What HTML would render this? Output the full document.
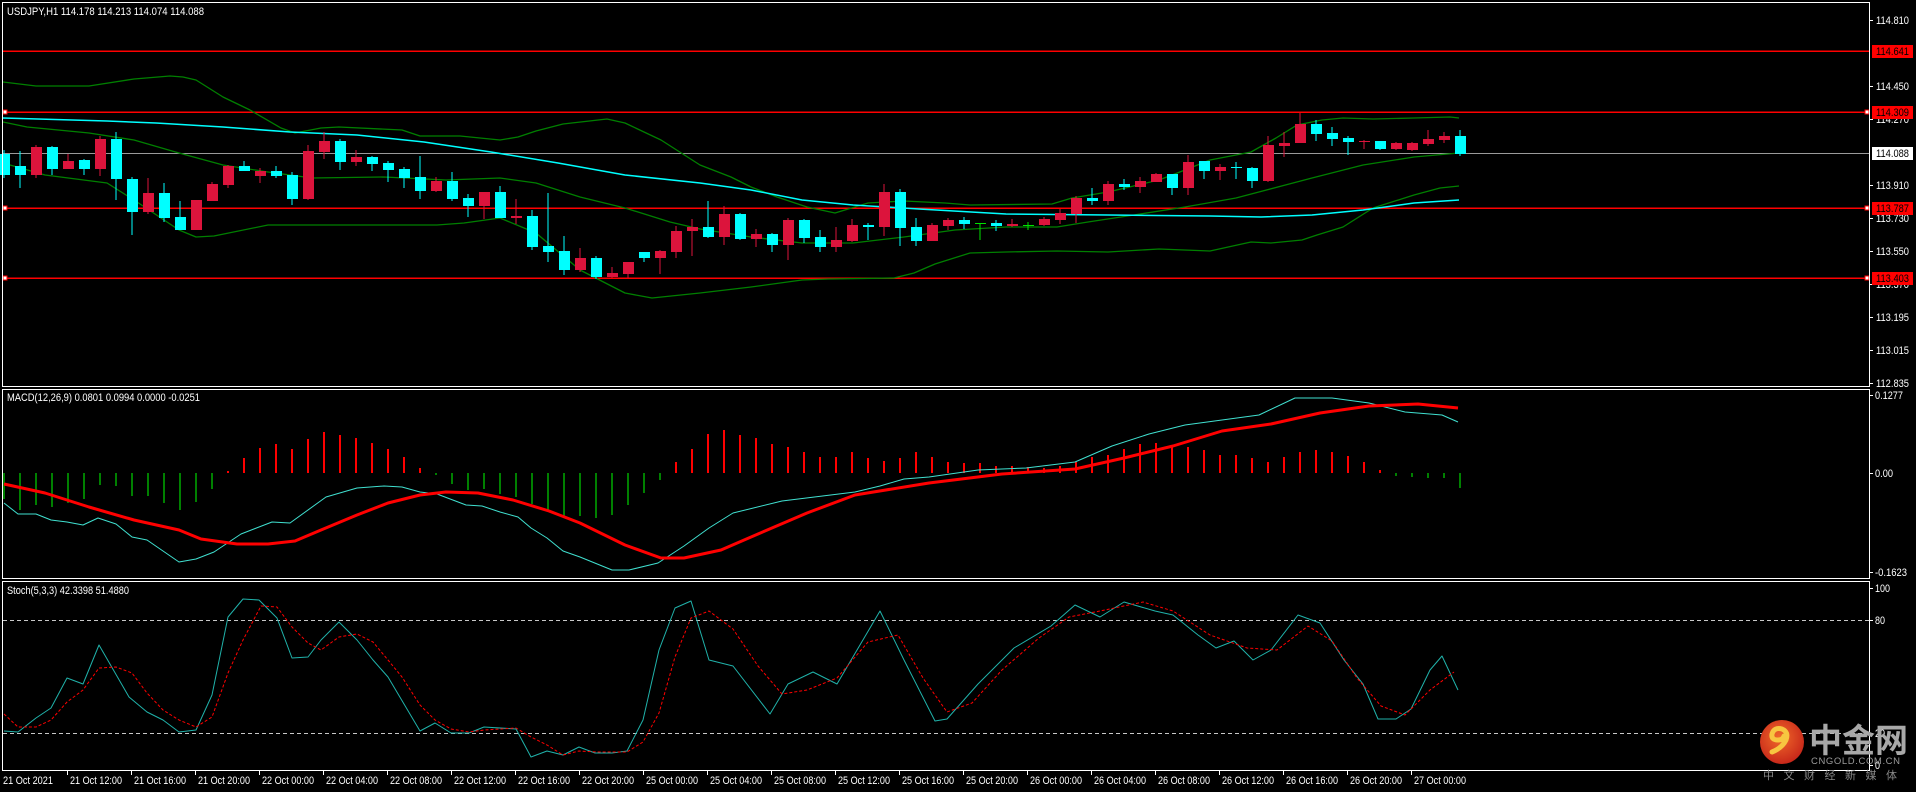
<!DOCTYPE html>
<html><head><meta charset="utf-8"><style>
html,body{margin:0;padding:0;background:#000;width:1916px;height:792px;overflow:hidden}
svg{display:block}
text{font-family:"Liberation Sans",sans-serif;font-size:11px;fill:#fff}
</style></head><body>
<svg id="s" width="1916" height="792" xmlns="http://www.w3.org/2000/svg">
<rect width="1916" height="792" fill="#000"/>
<g id="g"></g>
<g fill="none" stroke="#fff" stroke-width="1">
<rect x="2.5" y="2.5" width="1867" height="384"/>
<rect x="2.5" y="389.5" width="1867" height="189"/>
<rect x="2.5" y="581.5" width="1867" height="189"/>
</g>
<text x="7" y="15" textLength="197" lengthAdjust="spacingAndGlyphs">USDJPY,H1  114.178 114.213 114.074 114.088</text>
<text x="7" y="401" textLength="193" lengthAdjust="spacingAndGlyphs">MACD(12,26,9) 0.0801 0.0994 0.0000 -0.0251</text>
<text x="7" y="594" textLength="122" lengthAdjust="spacingAndGlyphs">Stoch(5,3,3) 42.3398 51.4880</text>
<g id="ax"></g>
<defs>
<radialGradient id="lg" cx="45%" cy="40%" r="60%"><stop offset="0" stop-color="#f06a2a"/><stop offset="1" stop-color="#c8281a"/></radialGradient>
</defs>
<circle cx="1782" cy="742" r="22" fill="url(#lg)"/>
<path d="M1772 752 q10 -4 14 -12 q3 -8 -4 -11 q-8 -2 -10 5 q-1 6 6 6 q5 0 6 -4" fill="none" stroke="#f7c640" stroke-width="5" stroke-linecap="round"/>
<text x="1809" y="752" style="font-family:'Noto Sans CJK SC',sans-serif;font-size:33px;font-weight:bold;fill:#a8a8a8">中金网</text>
<text x="1811" y="764" style="font-size:9.5px;fill:#9a9a9a;letter-spacing:0.6px">CNGOLD.COM.CN</text>
<text x="1763" y="779" style="font-family:'Noto Sans CJK SC',sans-serif;font-size:11px;fill:#888;letter-spacing:9.5px">中文财经新媒体</text>
</svg>
<script>
var NS="http://www.w3.org/2000/svg",g=document.getElementById('g'),ax=document.getElementById('ax');
function el(p,tag,a,txt){var e=document.createElementNS(NS,tag);for(var k in a)e.setAttribute(k,a[k]);if(txt!=null)e.textContent=txt;p.appendChild(e);return e;}
function line(pts,col,w,dash){el(g,'polyline',{points:pts.map(function(p){return p[0]+','+p[1]}).join(' '),fill:'none',stroke:col,'stroke-width':w||1,'stroke-dasharray':dash||'none','stroke-linejoin':'round'});}
[[51,'#f00'],[112,'#f00'],[208,'#f00'],[278,'#f00']].forEach(function(l){el(g,'rect',{x:3,y:l[0]-0.5,width:1867,height:1.5,fill:l[1]});});
el(g,'rect',{x:3,y:153,width:1867,height:1,fill:'#9a9a9a'});
line([[3,82],[36,86],[89,86],[134,79],[170,76],[183,77],[196,80],[223,97],[250,110],[281,128],[295,133],[321,128],[339,127],[402,130],[420,136],[460,136],[500,140],[518,137],[536,131],[563,124],[607,119],[625,123],[661,140],[700,165],[731,177],[751,187],[777,197],[807,207],[835,213],[868,203],[904,201],[945,203],[970,205],[1052,204],[1072,198],[1108,192],[1159,180],[1185,170],[1210,160],[1236,155],[1251,152],[1276,138],[1297,125],[1322,120],[1343,118],[1373,119],[1414,118],[1450,117],[1459,118]],'#007f00',1.3);
line([[3,122],[27,127],[89,133],[134,140],[179,153],[223,165],[268,172],[312,178],[384,177],[446,180],[500,178],[536,183],[580,197],[625,208],[670,222],[700,229],[751,237],[802,243],[853,243],[904,237],[955,230],[1006,227],[1057,227],[1088,222],[1134,215],[1185,207],[1236,198],[1312,178],[1363,165],[1414,157],[1459,153]],'#007f00',1.3);
line([[3,163],[45,175],[107,183],[134,200],[179,230],[196,237],[214,236],[268,225],[312,225],[437,225],[464,223],[500,218],[536,233],[580,270],[625,293],[652,298],[700,293],[751,287],[802,280],[828,279],[894,278],[914,273],[935,264],[970,253],[1006,252],[1057,251],[1108,252],[1159,249],[1210,251],[1251,242],[1271,243],[1302,240],[1317,235],[1343,227],[1373,208],[1414,195],[1440,188],[1459,186]],'#007f00',1.3);
line([[3,118],[107,121],[156,123],[223,127],[290,132],[357,135],[424,142],[491,152],[558,163],[625,175],[700,183],[751,190],[802,200],[853,205],[919,209],[1006,214],[1108,215],[1210,216],[1261,217],[1312,215],[1363,210],[1414,203],[1459,200]],'#00ffff',1.5);
var C=[[154,175,150,178,'c'],[166,175,151,188,'c'],[147,175,145,178,'r'],[147,169,146,175,'c'],[161,169,154,169,'r'],[160,169,159,175,'c'],[139,169,136,176,'r'],[139,179,132,200,'c'],[179,212,177,235,'c'],[193,212,178,214,'r'],[193,218,183,222,'c'],[217,230,201,230,'c'],[200,230,200,230,'r'],[184,201,182,201,'r'],[166,185,165,188,'r'],[166,171,161,171,'c'],[171,176,168,183,'r'],[171,176,166,178,'c'],[175,199,172,205,'c'],[151,199,145,200,'r'],[141,152,132,159,'r'],[141,162,139,170,'c'],[157,162,150,166,'r'],[157,164,156,171,'c'],[163,170,161,182,'c'],[169,178,167,188,'c'],[177,191,156,199,'c'],[181,191,177,192,'r'],[181,199,172,201,'c'],[198,206,194,217,'c'],[192,206,192,219,'r'],[192,218,186,218,'c'],[216,218,199,224,'r'],[216,247,210,250,'c'],[246,252,193,262,'c'],[251,270,236,275,'c'],[258,270,248,272,'r'],[258,277,256,279,'c'],[273,277,267,278,'r'],[262,274,262,278,'r'],[252,258,252,262,'c'],[251,258,250,274,'r'],[231,252,226,258,'r'],[227,231,219,256,'r'],
[227,237,201,238,'c'],[214,237,206,245,'r'],[214,239,213,240,'c'],[234,239,229,247,'r'],[234,245,233,252,'c'],[220,245,218,260,'r'],[220,238,219,243,'c'],[237,247,230,252,'c'],[240,247,227,252,'r'],[225,241,219,242,'r'],[225,227,223,240,'c'],[192,227,184,236,'r'],[192,228,189,246,'c'],[227,241,218,246,'c'],[225,241,223,241,'r'],[220,226,218,230,'r'],[220,224,217,229,'c'],[223,224,223,240,'d'],[223,226,220,231,'c'],[224,226,219,227,'r'],[225,226,222,230,'d'],[219,225,217,226,'r'],[213,220,209,224,'r'],[198,214,196,223,'r'],[198,201,188,205,'c'],[184,201,181,205,'r'],[184,187,179,190,'c'],[181,187,177,193,'r'],[174,182,173,182,'r'],[174,188,174,195,'c'],[162,188,155,195,'r'],[161,171,161,179,'c'],[167,171,164,180,'r'],[167,168,162,179,'c'],[168,181,167,188,'c'],[145,181,136,182,'r'],[143,146,132,157,'r'],[124,143,113,143,'r'],[124,134,120,141,'c'],[133,139,127,146,'c'],[138,142,136,155,'c'],[141,142,140,149,'r'],[141,149,141,150,'c'],[143,149,142,150,'r'],[143,150,142,151,'r'],[139,144,130,146,'r'],[136,140,132,143,'r'],[136,154,130,156,'c']];
var col={c:'#00ffff',r:'#dc143c',d:'#00e000'};
C.forEach(function(k,i){var x=4+16*i,cl=col[k[4]];
 el(g,'rect',{x:x-0.5,y:k[2],width:1,height:k[3]-k[2],fill:cl});
 var h=Math.max(k[1]-k[0],1);
 el(g,'rect',{x:x-5,y:k[0],width:11,height:h,fill:cl});});
[112,208,278].forEach(function(y){el(g,'rect',{x:3,y:y-2,width:4,height:4,fill:'#fff',stroke:'#f00','stroke-width':1});el(g,'rect',{x:1865,y:y-2,width:4,height:4,fill:'#fff',stroke:'#f00','stroke-width':1});});
var H=[-26,-37,-32,-34,-30,-26,-12,-13,-23,-23,-30,-37,-29,-16,2,15,25,29,24,34,41,38,35,30,24,16,5,-2,-11,-17,-16,-21,-24,-31,-38,-45,-43,-45,-42,-32,-20,-7,11,24,39,43,38,35,29,26,21,16,16,21,15,12,15,21,16,11,10,10,7,7,6,5,7,11,16,18,24,29,30,28,26,23,18,18,15,11,16,21,23,21,17,11,3,-3,-4,-5,-5,-15];
H.forEach(function(v,i){var x=4+16*i-1;if(v>0)el(g,'rect',{x:x,y:473-v,width:2,height:v,fill:'#f00'});else el(g,'rect',{x:x,y:473,width:2,height:-v,fill:'#008000'});});
line([[4,503],[18,514],[36,514],[51,520],[67,522],[83,525],[98,518],[116,524],[132,537],[147,540],[179,562],[196,559],[214,552],[241,534],[272,522],[290,523],[326,497],[357,488],[384,486],[402,487],[420,492],[437,494],[466,505],[482,506],[500,512],[518,517],[531,528],[547,538],[563,551],[580,557],[612,570],[629,570],[658,563],[684,546],[709,528],[733,513],[782,501],[855,492],[880,486],[904,479],[929,477],[978,470],[1026,468],[1075,462],[1112,446],[1149,434],[1185,425],[1222,420],[1259,415],[1295,398],[1332,398],[1369,403],[1405,412],[1442,415],[1458,422]],'#40e0d0',1);
line([[4,484],[45,493],[89,507],[134,520],[179,530],[201,539],[237,544],[268,544],[295,541],[321,530],[357,515],[388,503],[420,495],[446,492],[478,493],[513,500],[549,511],[580,523],[625,545],[661,558],[684,558],[721,550],[758,534],[807,513],[855,495],[929,483],[1002,474],[1075,469],[1124,458],[1173,446],[1222,431],[1271,424],[1320,413],[1369,406],[1418,404],[1458,408]],'#f00',3);
el(g,'line',{x1:3,y1:620.5,x2:1870,y2:620.5,stroke:'#c8c8c8','stroke-dasharray':'4,3'});
el(g,'line',{x1:3,y1:733.5,x2:1870,y2:733.5,stroke:'#c8c8c8','stroke-dasharray':'4,3'});
line([[4,731],[18,732],[36,718],[51,708],[67,678],[83,684],[99,645],[129,697],[147,712],[163,720],[179,732],[196,730],[212,695],[228,617],[243,599],[259,600],[277,618],[292,658],[308,657],[321,640],[339,622],[357,640],[373,660],[388,677],[420,731],[435,723],[451,733],[469,733],[484,727],[516,729],[531,757],[547,751],[563,755],[579,747],[595,753],[612,753],[627,751],[643,720],[659,650],[675,608],[691,601],[709,660],[733,666],[770,714],[788,684],[813,672],[837,684],[880,611],[904,660],[935,721],[947,719],[978,684],[1014,648],[1051,626],[1075,605],[1100,617],[1124,602],[1155,611],[1173,615],[1198,635],[1216,648],[1234,641],[1253,660],[1271,650],[1298,615],[1320,623],[1344,660],[1363,684],[1378,719],[1396,719],[1411,709],[1430,670],[1442,656],[1458,690]],'#20b2aa',1);
line([[4,714],[18,727],[36,727],[51,720],[67,702],[83,690],[99,668],[116,667],[132,673],[147,693],[163,710],[179,720],[196,727],[212,717],[228,673],[243,640],[261,606],[277,607],[292,627],[308,643],[321,650],[339,637],[357,634],[373,642],[388,660],[402,677],[420,705],[435,720],[451,729],[469,732],[484,730],[516,728],[531,737],[547,745],[563,755],[579,751],[598,752],[627,752],[643,742],[659,713],[675,657],[691,618],[709,611],[733,629],[758,666],[782,694],[807,690],[837,678],[868,642],[898,635],[923,678],[947,712],[972,703],[1002,670],[1039,638],[1069,617],[1100,611],[1143,602],[1173,611],[1210,635],[1247,648],[1277,650],[1308,626],[1332,641],[1357,678],[1381,706],[1405,715],[1430,690],[1454,672]],'#f00',1,'3,2');
function T(p,x,y,s,len,st){var a={x:x,y:y,textLength:len,lengthAdjust:'spacingAndGlyphs'};if(st)a.style=st;return el(p,'text',a,s);}
var P=[['114.810',20],['114.450',86],['114.270',119],['113.910',185],['113.730',218],['113.550',251],['113.370',284],['113.195',317],['113.015',350],['112.835',383]];
P.forEach(function(p){el(ax,'rect',{x:1870,y:p[1],width:3,height:1,fill:'#fff'});T(ax,1876,p[1]+4,p[0],33);});
[['114.641',51,'#f00'],['114.309',112,'#f00'],['113.787',208,'#f00'],['113.403',278,'#f00'],['114.088',153,'#fff']].forEach(function(p){el(ax,'rect',{x:1872,y:p[1]-6,width:41,height:13,fill:p[2]});T(ax,1876,p[1]+4,p[0],33,'fill:#000');});
[['0.1277',395,28],['0.00',473,18],['-0.1623',572,32]].forEach(function(p){el(ax,'rect',{x:1870,y:p[1],width:3,height:1,fill:'#fff'});T(ax,1875,p[1]+4,p[0],p[2]);});
[['100',588,15],['80',620,10],['20',733,10],['0',765,5]].forEach(function(p){el(ax,'rect',{x:1870,y:p[1],width:3,height:1,fill:'#fff'});T(ax,1875,p[1]+4,p[0],p[2]);});
T(ax,3,784,'21 Oct 2021',50);
var TL=['21 Oct 12:00','21 Oct 16:00','21 Oct 20:00','22 Oct 00:00','22 Oct 04:00','22 Oct 08:00','22 Oct 12:00','22 Oct 16:00','22 Oct 20:00','25 Oct 00:00','25 Oct 04:00','25 Oct 08:00','25 Oct 12:00','25 Oct 16:00','25 Oct 20:00','26 Oct 00:00','26 Oct 04:00','26 Oct 08:00','26 Oct 12:00','26 Oct 16:00','26 Oct 20:00','27 Oct 00:00'];
TL.forEach(function(t,i){var x=67+64*i;el(ax,'rect',{x:x,y:771,width:1,height:4,fill:'#fff'});T(ax,x+3,784,t,52);});
</script>
</body></html>
